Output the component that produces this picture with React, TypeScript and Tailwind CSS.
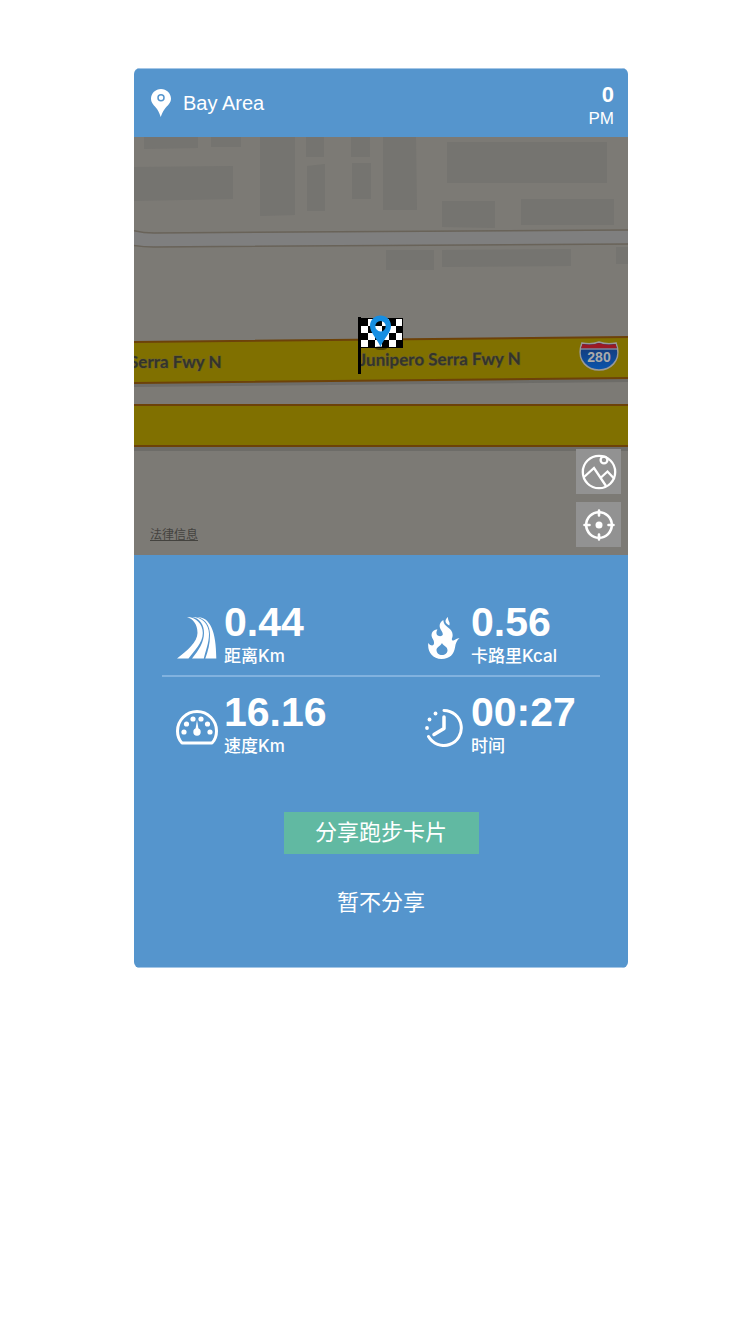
import React from "react";

const latin = "font-['Liberation_Sans','Noto_Sans_CJK_SC',sans-serif]";

function PinIcon() {
  return (
    <svg viewBox="0 0 20 28" className="h-7 w-5" aria-hidden="true">
      <path fill="#fff" d="M10 0C4.500 0 0 4.300 0 9.700 0 14 3.500 16.500 6 20c1.800 2.500 2.800 5.500 3.700 8 1-2.500 2-5.500 4-8 2.600-3.500 6.300-6 6.300-10.300C20 4.300 15.500 0 10 0Z" />
      <circle cx="10" cy="8.800" r="3" fill="none" stroke="#5595cd" strokeWidth="1.500" />
    </svg>
  );
}

function RoadIcon() {
  return (
    <svg viewBox="0 0 40 42" className="h-[42px] w-10" fill="#fff" aria-hidden="true">
      <path d="M0 41.500C10 34 20.500 25 20.500 16 20.500 7 16 2 10 0 19 0 25.800 7 25.800 16 25.800 26 17 34 11.500 41.500Z" />
      <path d="M15 41.500C22 33 27 25 27 16 27 8 23 1 15 0 25 0 32 7 32 17 32 26 28.500 34 26.800 41.500Z" />
      <path d="M28.300 41.500C31 34 33 27 33 18 33 9 29 2 20 0 33 0 39.300 14 39.300 41.500Z" />
    </svg>
  );
}

function FlameIcon() {
  return (
    <svg viewBox="0 0 32 42" className="h-[42px] w-8" fill="#fff" aria-hidden="true">
      <path fillRule="evenodd" d="M15.300 3C12 5 11 8 12 11 13 14 15 15 14.800 17.500 14 20 10 19.500 8.800 17.500 8 16 8.500 14 9.500 12.500 5.500 12.500 3.300 15.500 3.600 19 4 22 6.500 23 6 26.500 5.700 29 3 29.500.3 26-.8 34 4 42 13.500 42 22 42 26 37 27 30.500 27.500 26 29 23 31.500 21.200 29 21 27.500 22.500 26 23.300 24 24 23.300 22.500 24.300 20.500 25.500 16 23.500 13 20 10.500 17 8 15.500 6.500 15.300 3ZM14 26C15 28.500 19.500 29.500 19.500 33.200 19.500 36 17 38 14 38S8.500 36 8.500 33C8.500 30 12 29.500 14 26Z" />
      <path d="M20 0C16.500 3 16.500 6 21.300 8.500 22.800 5 19.500 4 20 0Z" />
    </svg>
  );
}

function GaugeIcon() {
  return (
    <svg viewBox="0 0 42 35" className="h-[35px] w-[42px]" aria-hidden="true">
      <path fill="none" stroke="#fff" strokeWidth="3" strokeLinejoin="round" d="M6 33C3 30 1.500 25 1.500 21a19.500 19.500 0 0 1 39 0c0 4-1.500 9-4.500 12Z" />
      <g fill="#fff">
        <circle cx="8" cy="22" r="2.600" /><circle cx="10.500" cy="14" r="2.600" />
        <circle cx="17" cy="9" r="2.600" /><circle cx="25" cy="9" r="2.600" />
        <circle cx="31.500" cy="14" r="2.600" /><circle cx="34" cy="22" r="2.600" />
        <circle cx="21" cy="22" r="3.700" /><path d="M21 10 23 22H19Z" />
      </g>
    </svg>
  );
}

function ClockIcon() {
  return (
    <svg viewBox="0 0 38 38" className="h-[38px] w-[38px]" aria-hidden="true">
      <g fill="none" stroke="#fff" strokeWidth="3" strokeLinecap="round" strokeLinejoin="round">
        <path d="M19 1.500a17.500 17.500 0 1 1-15.500 26" />
        <path d="M19 8V19.500L9 25.500" strokeWidth="3.500" />
      </g>
      <g fill="#fff"><circle cx="10.500" cy="4.500" r="1.900" /><circle cx="4.500" cy="10.500" r="1.900" /><circle cx="2" cy="19" r="1.900" /></g>
    </svg>
  );
}

function PhotoIcon() {
  return (
    <svg viewBox="0 0 36 36" className="h-9 w-9" fill="none" stroke="#fff" strokeWidth="2.300" aria-hidden="true">
      <circle cx="18" cy="18" r="16.200" />
      <path d="M2.500 23.500 13 14 25 32M20 23.500l6.500-6L33.500 25" />
      <circle cx="23" cy="6" r="3.400" />
    </svg>
  );
}

function TargetIcon() {
  return (
    <svg viewBox="0 0 32 32" className="h-8 w-8" fill="none" stroke="#fff" strokeWidth="2.600" strokeLinecap="round" aria-hidden="true">
      <circle cx="16" cy="16" r="12.800" />
      <path d="M16 1.500v5M16 25.500v5M1.500 16h5M25.500 16h5" />
      <circle cx="16" cy="16" r="3.500" fill="#fff" stroke="none" />
    </svg>
  );
}

const blocks = [
  "M10 0h54v11l-54 1Z", "M77 0h30v10H77Z", "M0 30l99-1v33l-99 2Z",
  "M126 0h35v78l-35 1Z", "M172 0h18v20h-18Z", "M173 29l18-2v47h-18Z",
  "M217 0h19v20h-19Z", "M218 26h19v36h-19Z", "M249 0h33l1 73h-34Z",
  "M313 5h160v41H313Z", "M308 64h53v27l-53-1Z", "M387 62h93v26h-93Z",
  "M252 113h48v20h-48Z", "M308 113l129-1v17l-129 1Z", "M482 110h12v17h-12Z",
];

const darkCells = [0, 1, 2, 3, 4, 5].flatMap((c) =>
  [0, 1, 2, 3].filter((r) => (c + r) % 2 === 0).map((r) => ({ c, r }))
);

function MapDrawing() {
  return (
    <svg viewBox="0 0 494 418" className="block w-full" role="img" aria-label="Junipero Serra Fwy N">
      <defs>
        <linearGradient id="shield" x1="0" y1="0" x2="0" y2="1">
          <stop offset="0" stopColor="#183670" /><stop offset="1" stopColor="#0a55ae" />
        </linearGradient>
      </defs>
      <path fill="#7c7a75" d="M0 0h494v418H0Z" />
      <path fill="#757470" d={blocks.join("")} />
      <path fill="#7f7f7f" stroke="#696359" strokeWidth="1.500" d="M-3 93Q8 96 20 96L497 93V107L20 110Q8 110-3 108Z" />
      <path fill="#6d6c68" d="M0 244 494 240v5L0 250ZM0 308h494v6H0Z" />
      <path fill="#807000" stroke="#6d4209" strokeWidth="2" d="M-2 205 496 200V241L-2 246ZM-2 268H496V309H-2Z" />
      <g fill="#34342b" stroke="#6b6330" strokeWidth="1" paintOrder="stroke" className="font-['Lato','Noto_Sans',sans-serif] text-[17px] font-bold">
        <text x="-5" y="231">Serra Fwy N</text>
        <text x="225" y="229" transform="rotate(-0.500 225 229)">Junipero Serra Fwy N</text>
      </g>
      <path fill="url(#shield)" stroke="#999" strokeWidth="1.500" d="M448 206q9 2 17-1 8 3 17 1l1.500 5c2.500 13-7 22-18.500 22s-21-9-18.500-22Z" />
      <path fill="#9b1924" d="M448.500 207q8.500 2 16.500-1 8 3 16.500 1l1.500 4.500h-36Z" />
      <path stroke="#aaa" d="M447 212h36" />
      <text x="465" y="225" textAnchor="middle" fill="#aaa" className="font-['Liberation_Sans',sans-serif] text-[14px] font-bold">280</text>
      <path fill="#000" d="M224 180h3v57h-3ZM227 181h42v30h-42Z" />
      <path fill="#fff" d="M227 182h41v28h-41Z" />
      {darkCells.map(({ c, r }) => <rect key={`${c}-${r}`} x={227 + c * 7} y={182 + r * 7} width="7" height="7" fill="#000" />)}
      <ellipse cx="247" cy="211" rx="6" ry="2" fill="#000" opacity="0.400" />
      <path fill="#168ee2" fillRule="evenodd" d="M246.500 178.500c-6 0-10.500 4.500-10.500 10.500 0 7 7 12 10.500 21 3.500-9 10.500-14 10.500-21 0-6-4.500-10.500-10.500-10.500Zm0 5.500a5.200 5.200 0 1 1 0 10.400 5.200 5.200 0 0 1 0-10.400Z" />
    </svg>
  );
}

function Stat({ icon, value, label }: { icon: React.ReactNode; value: string; label: string }) {
  return (
    <div className="flex min-w-0 items-center gap-1">
      <div className="flex w-[46px] shrink-0 justify-center pt-2">{icon}</div>
      <div className="whitespace-nowrap">
        <div className="text-[41px] leading-[46px] font-bold">{value}</div>
        <div className="font-['Inter','Noto_Sans_CJK_SC',sans-serif] text-[17px] leading-[23px] font-medium">{label}</div>
      </div>
    </div>
  );
}

export default function App() {
  return (
    <main className={`min-h-screen bg-white pt-[68px] pr-4 pb-16 pl-7 text-white ${latin}`}>
      <section className="mx-auto max-w-[494px] overflow-hidden rounded-md bg-[#5595cd]">
        <header className="flex min-h-[69px] items-center justify-between border-t border-[#a4c6e6] pr-[14px] pl-[17px]">
          <div className="flex items-center gap-3">
            <PinIcon />
            <h1 className="text-xl leading-7">Bay Area</h1>
          </div>
          <div className="pt-2 text-right">
            <div className="text-[22px] leading-6 font-bold">0</div>
            <div className="text-[17px] leading-6">PM</div>
          </div>
        </header>
        <div className="relative">
          <MapDrawing />
          <a href="#legal" className="absolute bottom-3 left-4 text-xs leading-4 text-[#44433f] underline">法律信息</a>
          <div className="absolute right-[7px] bottom-2 flex flex-col gap-2">
            <button type="button" aria-label="Photo" className="flex h-[45px] w-[45px] items-center justify-center bg-[#929292]"><PhotoIcon /></button>
            <button type="button" aria-label="Locate" className="flex h-[45px] w-[45px] items-center justify-center bg-[#929292]"><TargetIcon /></button>
          </div>
        </div>
        <div className="border-b border-[#a4c6e6] px-7 pt-11 pb-[43px]">
          <div className="grid grid-cols-[247px_auto] border-b-2 border-[#81b2df] pb-[7px] pl-3">
            <Stat icon={<RoadIcon />} value="0.44" label="距离Km" />
            <Stat icon={<FlameIcon />} value="0.56" label="卡路里Kcal" />
          </div>
          <div className="grid grid-cols-[247px_auto] pt-3 pl-3">
            <Stat icon={<GaugeIcon />} value="16.16" label="速度Km" />
            <Stat icon={<ClockIcon />} value="00:27" label="时间" />
          </div>
          <div className="mt-[54px] flex flex-col items-center gap-7">
            <button type="button" className="h-[42px] w-[195px] bg-[#61b9a2] text-[22px] leading-8">分享跑步卡片</button>
            <button type="button" className="h-[42px] px-4 text-[22px] leading-8">暂不分享</button>
          </div>
        </div>
      </section>
    </main>
  );
}
